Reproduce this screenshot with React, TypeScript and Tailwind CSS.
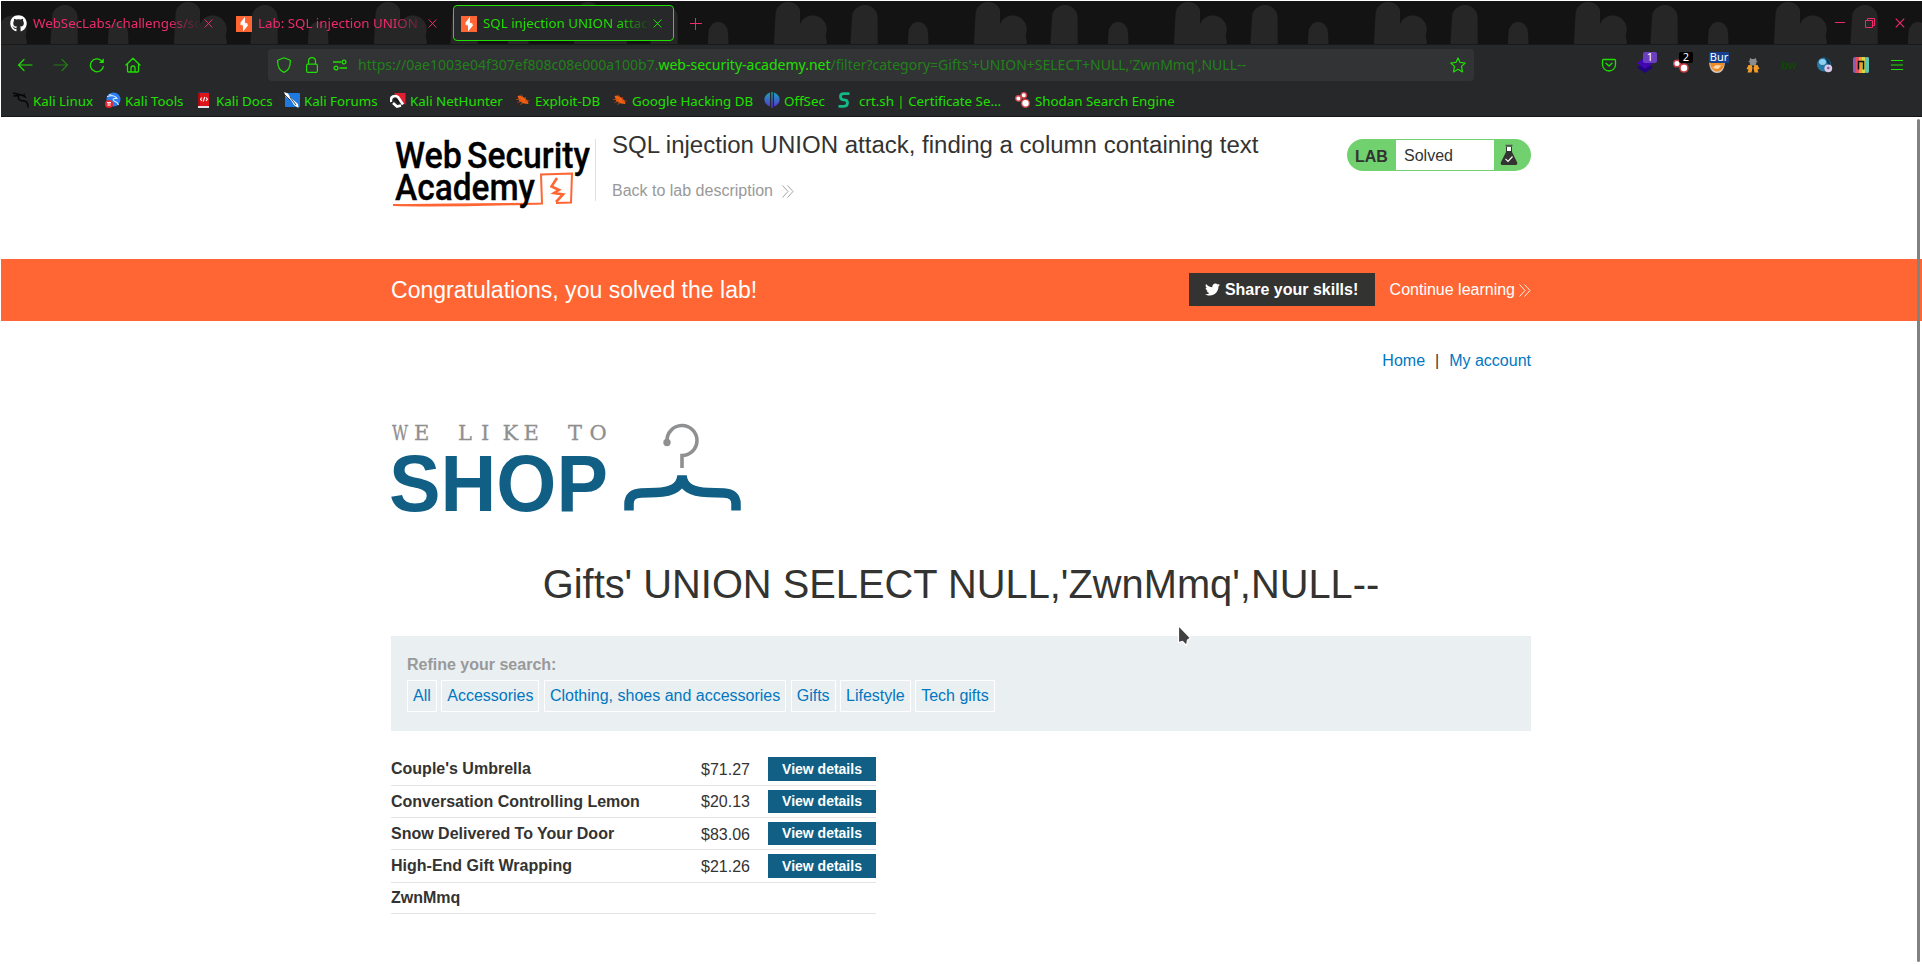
import React from 'react';
import { FaGithub, FaTwitter } from 'react-icons/fa';

const BurpIcon = () => (
  <svg width="16" height="16" viewBox="0 0 16 16" className="shrink-0">
    <rect width="16" height="16" fill="#ff6633" />
    <path d="M9 0.800 L4 7.200 L7 9 V15.400 L12.300 9 L8.900 7.200 Z" fill="#fff" />
    <path d="M7 9 L4.500 8.500 M8.900 7.200 L11.500 8" stroke="#fff" strokeWidth="1" />
  </svg>
);

const Fingers = () => (
  <svg className="absolute inset-0" width="1921" height="43">
    <defs>
      <pattern id="fingers" width="200" height="43" patternUnits="userSpaceOnUse" x="-1" y="0">
        <g fill="#262626">
          <path d="M0 23 A12.500 12.500 0 0 1 25.500 34 L27 43 H0 Z" />
          <path d="M174 43 L175.500 14 A12.700 13 0 0 1 201 14 V43 Z" />
          <path d="M50.500 43 L52 17 A12.800 13 0 0 1 77.600 17 V43 Z" />
          <path d="M108 43 L108.500 32 A9.700 11 0 0 1 128 32 L128.500 43 Z" />
        </g>
      </pattern>
    </defs>
    <rect width="1921" height="43" fill="url(#fingers)" />
  </svg>
);

const Cross = ({ size = 9 }: { size?: number }) => (
  <svg width={size} height={size} viewBox="0 0 9 9" fill="none" stroke="currentColor" strokeWidth="1">
    <path d="M0.700 0.500 L8.300 8.500 M8.300 0.500 L0.700 8.500" />
  </svg>
);

const BackIcon = () => (
  <svg width="16" height="16" viewBox="0 0 16 16" fill="none" stroke="currentColor" strokeWidth="1.200" strokeLinecap="round">
    <path d="M1.500 8 H15 M7 2.500 L1.500 8 L7 13.500" />
  </svg>
);

const ReloadIcon = () => (
  <svg width="16" height="16" viewBox="0 0 16 16" fill="none" stroke="currentColor" strokeWidth="1.300">
    <path d="M14.400 9 A6.500 6.500 0 1 1 12.500 3.700" />
    <path d="M14.800 1.200 V6 H10 Z" fill="currentColor" stroke="none" />
  </svg>
);

const HomeIcon = () => (
  <svg width="16" height="16" viewBox="0 0 16 16" fill="none" stroke="currentColor" strokeWidth="1.300" strokeLinejoin="round" strokeLinecap="round">
    <path d="M1 8 L8 1.300 L15 8 M2.500 7 V14 Q2.500 15 3.500 15 H12.500 Q13.500 15 13.500 14 V7 M6 15 V10.500 Q6 9 8 9 Q10 9 10 10.500 V15" />
  </svg>
);

const ShieldIcon = () => (
  <svg width="16" height="16" viewBox="0 0 16 16" fill="none" stroke="currentColor" strokeWidth="1.200" strokeLinejoin="round">
    <path d="M8 0.800 L14.300 3.200 C14.600 9 12.500 13.500 8 15.400 C3.500 13.500 1.400 9 1.700 3.200 Z" />
  </svg>
);

const LockIcon = () => (
  <svg width="16" height="16" viewBox="0 0 16 16" fill="none" stroke="currentColor" strokeWidth="1.200">
    <rect x="2.600" y="7.200" width="10.800" height="8.200" rx="1.500" />
    <path d="M4.500 7 V4.200 A3.500 3.500 0 0 1 11.500 4.200 V7" />
  </svg>
);

const PermIcon = () => (
  <svg width="16" height="16" viewBox="0 0 16 16" fill="none" stroke="currentColor" strokeWidth="1.300">
    <path d="M1 5 H9 M7.500 11 H15" />
    <circle cx="12" cy="5" r="1.900" />
    <circle cx="4" cy="11" r="1.900" />
  </svg>
);

const StarIcon = () => (
  <svg width="16" height="16" viewBox="0 0 16 16" fill="none" stroke="currentColor" strokeWidth="1.200" strokeLinejoin="round">
    <path d="M8 0.900 L10.100 5.400 L15.200 6 L11.500 9.400 L12.500 14.900 L8 12.300 L3.500 14.900 L4.500 9.400 L0.800 6 L5.900 5.400 Z" />
  </svg>
);

const Spider = () => (
  <svg width="16" height="16" viewBox="0 0 16 16">
    <path d="M2.500 4 L5 3.500 L9 5.500 L12.500 8.500 L13.500 12 L9 11.500 L4.500 9.500 Z" fill="#f06014" />
    <path d="M1 7.500 H6 M2.500 10.500 L7 9 M5 12.500 L8 11 M6 2.500 L8.500 6 M10.500 5 L10.500 8 M14.500 9 L10 9" stroke="#c4480e" strokeWidth="0.800" fill="none" />
  </svg>
);

const bookmarks: { label: string; slot: string; icon: React.ReactNode }[] = [
  {
    label: 'Kali Linux',
    slot: 'w-[92px]',
    icon: (
      <svg width="16" height="16" viewBox="0 0 16 16" fill="none" stroke="#050505" strokeWidth="1.400">
        <path d="M0 1 L6 2.500 L10 3.500 L13 5.500 M0.500 4 L6 3.500 M6 3 C4 7 7 9 11 9 C14 9 15 12 15 15.500 M9 4 L12 2.500" />
      </svg>
    ),
  },
  {
    label: 'Kali Tools',
    slot: 'w-[91px]',
    icon: (
      <svg width="16" height="16" viewBox="0 0 16 16">
        <circle cx="8.500" cy="7.500" r="7" fill="#2c7df0" />
        <path d="M2 4.500 C7 3 11 4 12 6.500 C9 6 7 7 9 9 C12 10 13 11 13.500 13 M4 2.500 L10 4.500" stroke="#cfe4ff" strokeWidth="1.100" fill="none" />
        <circle cx="4" cy="12" r="4" fill="#e8262b" />
        <path d="M2 10.500 H6 M3.200 10.500 V14 M4.900 10.500 V14" stroke="#fff" strokeWidth="0.900" />
      </svg>
    ),
  },
  {
    label: 'Kali Docs',
    slot: 'w-[88px]',
    icon: (
      <svg width="16" height="16" viewBox="0 0 16 16">
        <rect x="2" y="0" width="11" height="2" fill="#233a6b" />
        <rect x="2" y="1" width="11" height="13" fill="#dd1519" />
        <rect x="2" y="1" width="2" height="13" fill="#a50d10" />
        <rect x="2" y="14" width="11" height="2" fill="#dfe3e8" />
        <path d="M5.800 5.500 L4.500 7.200 L5.800 9 M10 5.500 L11.500 7.200 L10 9 M8.700 5 L7.200 9.500" stroke="#fff" strokeWidth="1.100" fill="none" />
      </svg>
    ),
  },
  {
    label: 'Kali Forums',
    slot: 'w-[106px]',
    icon: (
      <svg width="16" height="16" viewBox="0 0 16 16">
        <rect x="1" y="1" width="15" height="14" rx="1" fill="#1f7ae0" />
        <path d="M0 0 L4 1.500 L6 5 L14 12 L14.500 16 L10 13 L7 8 L2 5 Z" fill="#fff" />
        <path d="M1 3 L6 8 M6 5 L12 13" stroke="#1b1b1b" strokeWidth="0.800" />
      </svg>
    ),
  },
  {
    label: 'Kali NetHunter',
    slot: 'w-[125px]',
    icon: (
      <svg width="16" height="16" viewBox="0 0 16 16">
        <path d="M4 1 H15.500 V13 Z" fill="#e02030" />
        <path d="M1 10 C0 4 5 3 8 5 L13 12.500 M3 11 L7 14.500 L11 13.500" stroke="#fff" strokeWidth="2.600" fill="none" />
        <path d="M4 8 C6 6.500 8 8 8.500 11" stroke="#111" strokeWidth="1.400" fill="none" />
      </svg>
    ),
  },
  { label: 'Exploit-DB', slot: 'w-[97px]', icon: <Spider /> },
  { label: 'Google Hacking DB', slot: 'w-[152px]', icon: <Spider /> },
  {
    label: 'OffSec',
    slot: 'w-[74px]',
    icon: (
      <svg width="16" height="16" viewBox="0 0 16 16">
        <defs>
          <linearGradient id="off" x1="0" y1="0" x2="0" y2="1">
            <stop offset="0" stopColor="#16a5b8" />
            <stop offset="1" stopColor="#5b2fd6" />
          </linearGradient>
        </defs>
        <path d="M6 0.500 V14.500 C-1.500 12 -1.500 3 6 0.500 Z M7.300 0 H8.700 V16 H7.300 Z M10 0.500 C17.500 3 17.500 12 10 14.500 Z" fill="url(#off)" />
      </svg>
    ),
  },
  {
    label: 'crt.sh | Certificate Se...',
    slot: 'w-[177px]',
    icon: (
      <svg width="17" height="16" viewBox="0 0 17 16" fill="none" stroke="#12b886" strokeWidth="2.800">
        <path d="M11.500 1.600 H5.500 Q2.500 1.600 2.500 4.500 Q2.500 7.800 6 7.800 Q9.500 7.800 9.500 10.800 Q9.500 14.300 6 14.300 H0.500" />
      </svg>
    ),
  },
  {
    label: 'Shodan Search Engine',
    slot: 'w-[170px]',
    icon: (
      <svg width="16" height="16" viewBox="0 0 16 16" fill="#fff" stroke="#d0454c" strokeWidth="1.400">
        <circle cx="3.400" cy="6.400" r="2.700" />
        <circle cx="8.800" cy="3.300" r="2.700" />
        <circle cx="10.500" cy="11.300" r="3.900" />
      </svg>
    ),
  },
];

const extensions: React.ReactNode[] = [
  <svg width="16" height="16" viewBox="0 0 16 16" fill="none" stroke="#20e000" strokeWidth="1.300" strokeLinejoin="round" strokeLinecap="round">
    <path d="M2.500 2.500 H13.500 Q14.500 2.500 14.500 3.500 V7.500 A6.500 6.500 0 0 1 1.500 7.500 V3.500 Q1.500 2.500 2.500 2.500 Z M5 6.200 L8 9 L11 6.200" />
  </svg>,
  <svg width="16" height="16" viewBox="0 0 16 16">
    <path d="M8 5 L16 10.500 L8 16 L0 10.500 Z" fill="#22057e" />
    <path d="M8 0 L16 6 L8 12 L0 6 Z" fill="#4207b0" />
  </svg>,
  <svg width="16" height="16" viewBox="0 0 16 16" fill="#fff" stroke="#c94048" strokeWidth="1.600">
    <circle cx="4" cy="6.500" r="3.300" />
    <circle cx="11" cy="11" r="4" />
  </svg>,
  <svg width="16" height="16" viewBox="0 0 16 16">
    <path d="M0 3 H16 C16 10 14 16 8 16 C2 16 0 10 0 3 Z" fill="#cfc6be" />
    <path d="M1 5 H15 C15 10 13 14 8 14.500 C4 14 1 10 1 5 Z" fill="#f08a24" />
    <path d="M3.500 11 L7 8 L12.500 8.500 L9 12 Z" fill="#fbd9ae" />
  </svg>,
  <svg width="16" height="16" viewBox="0 0 16 16">
    <path d="M4.500 4 L5 1 L7 2 H9 L11 1 L11.500 4 L13 5 H11.500 L11 7.500 L9.500 8.500 H6.500 L5 7.500 L4.500 5 H3 Z" fill="#8d8d8d" />
    <path d="M3.500 8 H6.500 L7.500 11 L6.500 15.500 H2.500 L3.500 12.500 L1.500 12 Z M12.500 8 H9.500 L8.500 11 L9.500 15.500 H13.500 L12.500 12.500 L14.500 12 Z" fill="#f39a27" />
  </svg>,
  <span className="font-['Liberation_Sans'] text-[11px] leading-4 font-black text-[#0b4a08]">bw</span>,
  <svg width="16" height="16" viewBox="0 0 16 16">
    <circle cx="7" cy="7.500" r="7" fill="#2878a4" />
    <ellipse cx="5.500" cy="5" rx="3.500" ry="3" fill="#8fd0ee" />
    <path d="M7 0.500 A7 7 0 0 1 9 14 C12 9 11 4 7 0.500" fill="#0f3550" />
    <circle cx="11.300" cy="11.300" r="3.900" fill="#d9c9e4" />
    <circle cx="11.300" cy="11" r="1.300" fill="#8756a8" />
  </svg>,
  <svg width="16" height="16" viewBox="0 0 16 16">
    <rect width="16" height="16" rx="2" fill="#8b5bb5" />
    <rect x="3" width="3" height="16" fill="#e8505b" />
    <rect x="6" width="3" height="16" fill="#f59b3a" />
    <rect x="9" width="3" height="16" fill="#d8d845" />
    <rect x="12" width="4" height="16" rx="2" fill="#5cc6b0" />
    <path d="M5.500 12.500 V4.500 H10.500 V12.500" fill="none" stroke="#111" strokeWidth="1.600" />
  </svg>,
  <svg width="16" height="16" viewBox="0 0 16 16" stroke="#20e000" strokeWidth="1.200">
    <path d="M2 3.500 H14 M2 8 H14 M2 12.500 H14" />
  </svg>,
];

const badges: (React.ReactNode | null)[] = [
  null,
  <span className="absolute -top-[5px] left-[6px] flex h-[11px] w-[14px] items-center justify-center rounded-[2px] bg-[#6c3fc0] text-[11px] text-white">1</span>,
  <span className="absolute -top-[5px] left-[6px] flex h-[11px] w-[14px] items-center justify-center rounded-[2px] bg-black text-[11px] text-white">2</span>,
  <span className="absolute -top-[5px] left-0 flex h-[11px] w-[20px] items-center justify-center rounded-[1px] bg-[#173f8f] text-[11px] text-white">Bur</span>,
];

const DoubleChevron = () => (
  <svg width="12" height="13" viewBox="0 0 12 13" fill="none" stroke="currentColor" strokeWidth="0.900">
    <path d="M0.500 0.500 L6 6.500 L0.500 12.500 M5.500 0.500 L11 6.500 L5.500 12.500" />
  </svg>
);

const filters = ['All', 'Accessories', 'Clothing, shoes and accessories', 'Gifts', 'Lifestyle', 'Tech gifts'];

const products = [
  { name: "Couple's Umbrella", price: '$71.27', row: 'h-[33px]', pad: 'pt-[2px]', button: 'h-6' },
  { name: 'Conversation Controlling Lemon', price: '$20.13', row: 'h-[32px]', pad: '', button: 'h-[23px]' },
  { name: 'Snow Delivered To Your Door', price: '$83.06', row: 'h-[32px]', pad: 'pt-[2px]', button: 'h-[23px]' },
  { name: 'High-End Gift Wrapping', price: '$21.26', row: 'h-[33px]', pad: 'pt-px', button: 'h-6' },
  { name: 'ZwnMmq', price: '', row: 'h-[31px]', pad: '', button: '' },
];

const tabLabel = 'ml-[6px] w-[168px] overflow-hidden whitespace-nowrap pt-px [mask-image:linear-gradient(to_right,black_80%,transparent)]';

function TabStrip() {
  return (
    <div className="relative h-[44px] border-b border-[#191919] bg-[#131313] text-[13.333px] text-[#ee2b6a]">
      <Fingers />
      <div className="relative flex h-[43px] pt-1">
        <div className="flex h-9 w-[215px] items-center pt-px pl-[9px]">
          <FaGithub size={17} color="#fff" className="shrink-0" />
          <span className={tabLabel}>WebSecLabs/challenges/sql</span>
          <span className="ml-[3px]"><Cross /></span>
        </div>
        <div className="flex h-9 w-[237px] items-center pt-px pl-[20px]">
          <BurpIcon />
          <span className={tabLabel}>Lab: SQL injection UNION attack</span>
          <span className="ml-[2px]"><Cross /></span>
        </div>
        <div className="flex h-9 w-[221px] items-center rounded-[4px] border border-[#20e000] bg-[#262829] pt-px pl-[7px] text-[#20e000]">
          <BurpIcon />
          <span className={tabLabel}>SQL injection UNION attack, finding</span>
          <span className="ml-[2px]"><Cross /></span>
        </div>
        <svg width="12" height="12" viewBox="0 0 12 12" className="mt-[13px] ml-[16px]" stroke="currentColor" strokeWidth="1">
          <path d="M0 5.500 H12 M5.500 0 V12" />
        </svg>
        <div className="ml-auto flex h-9 items-center gap-[20px] pr-[17px]">
          <svg width="10" height="10" viewBox="0 0 10 10" stroke="currentColor"><path d="M0 4.500 H10" /></svg>
          <svg width="10" height="10" viewBox="0 0 10 10" fill="none" stroke="currentColor"><path d="M0.500 2.500 H7.500 V9.500 H0.500 Z M2.500 2.500 V0.500 H9.500 V7.500 H7.500" /></svg>
          <Cross size={10} />
        </div>
      </div>
    </div>
  );
}

function NavBar() {
  return (
    <div className="flex h-[40px] items-center text-[#20e000]">
      <div className="flex w-[267px] items-center gap-5 pl-4">
        <BackIcon />
        <span className="rotate-180 opacity-45"><BackIcon /></span>
        <ReloadIcon />
        <HomeIcon />
      </div>
      <div className="flex h-8 w-[1206px] items-center rounded-[4px] bg-[#323335] pr-2 pl-2">
        <div className="flex w-[82px] shrink-0 gap-3">
          <ShieldIcon />
          <LockIcon />
          <PermIcon />
        </div>
        <span className="pb-px text-[14px] whitespace-pre text-[#22801a]">
          https://0ae1003e04f307ef808c08e000a100b7.<span className="text-[#20e000]">web-security-academy.net</span>/filter?category=Gifts'+UNION+SELECT+NULL,'ZwnMmq',NULL--
        </span>
        <span className="ml-auto"><StarIcon /></span>
      </div>
      <div className="ml-auto flex gap-5 pr-[17px]">
        {extensions.map((icon, i) => (
          <span key={i} className="relative flex h-4 w-4 items-center justify-center">
            {icon}
            {badges[i]}
          </span>
        ))}
      </div>
    </div>
  );
}

function Browser() {
  return (
    <header className="ml-px h-[116px] border-b border-[#161616] bg-[#262829] font-['Noto_Sans',sans-serif]">
      <TabStrip />
      <NavBar />
      <nav className="flex h-[31px] items-center pl-3 text-[13.333px] text-[#20e000]">
        {bookmarks.map((b) => (
          <div key={b.label} className={'flex shrink-0 items-center gap-1 whitespace-nowrap ' + b.slot}>
            <span className="shrink-0">{b.icon}</span>
            <span className="pt-[2px]">{b.label}</span>
          </div>
        ))}
      </nav>
    </header>
  );
}

const AcademyLogo = () => (
  <svg width="200" height="76" viewBox="0 0 200 76" className="-ml-px shrink-0">
    <g fill="none" stroke="#ff6633">
      <path d="M3 66 C50 67.500 90 66 152 64.500 L151 35.500 L182 34.500 L181 63.500 L166 64" strokeWidth="2" />
      <path d="M3 66 L60 65.300 L140 64.500" strokeWidth="1.500" />
      <path d="M167 39 L161.500 47.500 L169 51 L164 54 L173 55.500 L166 63" strokeWidth="2.600" />
    </g>
    <g fill="#000" stroke="#000" strokeWidth="0.300" fontFamily="Roboto" fontWeight="500" fontSize="37.500">
      <text x="5" y="28.500" textLength="67" lengthAdjust="spacingAndGlyphs">Web</text>
      <text x="77" y="28.500" textLength="123" lengthAdjust="spacingAndGlyphs">Security</text>
      <text x="5" y="61" textLength="140" lengthAdjust="spacingAndGlyphs">Academy</text>
    </g>
  </svg>
);

const ShopLogo = () => (
  <svg width="352" height="92" viewBox="0 0 352 92">
    <g fontFamily="DejaVu Serif" fontSize="21" fill="#8f8f8f" stroke="#8f8f8f" strokeWidth="0.300">
      <text x="1" y="18" textLength="16" lengthAdjust="spacingAndGlyphs">W</text>
      <text y="18" x="23 67 90 111.500 132.500">ELIKE</text>
      <text y="18" x="177 198.500">TO</text>
    </g>
    <text x="-2" y="89" fontFamily="Liberation Sans" fontWeight="700" fontSize="80" fill="#115f84" textLength="219" lengthAdjust="spacingAndGlyphs">SHOP</text>
    <path d="M276 19 A15 15 0 1 1 291 33.500 V46" fill="none" stroke="#8f9092" strokeWidth="3.600" />
    <circle cx="276" cy="20.500" r="3.700" fill="#8f9092" />
    <path d="M238 88.500 V82 Q238 71.500 250 71 L265 70.500 Q290 70 291 53.500 Q292 70 317 70.500 L333 71 Q345 71.500 345 82 V88.500" fill="none" stroke="#115f84" strokeWidth="9.500" />
  </svg>
);

function LabHeader() {
  return (
    <section className="mx-auto flex h-[142px] w-[1140px]">
      <div className="mt-[22px] flex h-[62px] w-[205px] border-r border-[#e0e0e0]">
        <AcademyLogo />
      </div>
      <div className="pt-[14px] pl-[16px]">
        <h2 className="text-[24.03px] leading-7">SQL injection UNION attack, finding a column containing text</h2>
        <a className="mt-[22px] flex items-center gap-[9px] text-[16px] leading-5 text-[#999]">
          Back to lab description <DoubleChevron />
        </a>
      </div>
      <div className="mt-[22px] ml-auto flex h-8 w-[184px] items-center rounded-full bg-[#71d16e]">
        <span className="w-[49px] pt-[3px] pl-[8px] text-[16px] leading-6 font-bold">LAB</span>
        <span className="flex h-[30px] w-[98px] items-center bg-white pt-[2px] pl-2 text-[16px]">Solved</span>
        <svg width="18" height="22" viewBox="0 0 18 22" className="ml-[6px]">
          <path d="M6 2.500 H12 V8 L17 18 Q18 21 15.500 21 H2.500 Q0 21 1 18 L6 8 Z" fill="#333332" />
          <rect x="7" y="3" width="4" height="4" fill="#fff" />
          <path d="M5.500 1.500 H12.500" stroke="#555" strokeWidth="1.500" />
          <path d="M5.500 14.800 L8 17.300 L12.500 12.500" fill="none" stroke="#fff" strokeWidth="1.200" />
        </svg>
      </div>
    </section>
  );
}

export default function App() {
  return (
    <div className="relative h-[965px] w-[1922px] overflow-hidden bg-white pt-px font-['Liberation_Sans',Arial,sans-serif] text-[#333332]">
      <Browser />
      <LabHeader />
      <section className="ml-px h-[62px] bg-[#ff6633] text-white">
        <div className="ml-[390px] flex h-full w-[1140px] items-center">
          <p className="text-[23.04px]">Congratulations, you solved the lab!</p>
          <div className="mb-px ml-auto flex h-[33px] w-[186px] items-center justify-center gap-[5px] bg-[#333332] text-[16px] font-bold">
            <FaTwitter size={15} />
            Share your skills!
          </div>
          <a className="ml-[15px] flex items-center gap-[4px] text-[16px]">
            Continue learning <DoubleChevron />
          </a>
        </div>
      </section>
      <main className="mx-auto w-[1140px]">
        <div className="flex h-[80px] items-center justify-end gap-[10px] text-[16px] text-[#0077c0]">
          <a>Home</a>
          <span className="text-[#333332]">|</span>
          <a>My account</a>
        </div>
        <div className="h-[140px] pt-[21px]">
          <ShopLogo />
        </div>
        <h1 className="flex h-[95px] items-center justify-center pb-[7px] text-[39.84px]">Gifts' UNION SELECT NULL,'ZwnMmq',NULL--</h1>
        <div className="h-[95px] bg-[#eaeff2] px-4 pt-[18px]">
          <p className="text-[16px] leading-[22px] font-bold text-[#999]">Refine your search:</p>
          <div className="mt-1 flex gap-[4.440px] text-[16px] text-[#0077c0]">
            {filters.map((f) => (
              <a key={f} className="flex h-8 items-center border border-white px-[5px]">{f}</a>
            ))}
          </div>
        </div>
        <div className="mt-[22px] w-[485px]">
          {products.map((p) => (
            <div key={p.name} className={'flex items-center border-b border-[#e4e4e4] ' + p.row}>
              <span className="w-[310px] text-[16px] leading-5 font-bold">{p.name}</span>
              <span className={'w-[67px] text-[16px] leading-5 ' + p.pad}>{p.price}</span>
              {p.price && (
                <span className={'flex w-[108px] items-center justify-center bg-[#115f84] text-[14px] font-bold text-white ' + p.button}>View details</span>
              )}
            </div>
          ))}
        </div>
      </main>
      <div className="absolute top-[119px] left-[1917px] h-[843px] w-[3px] rounded-full bg-[#7f8482]" />
      <svg className="absolute top-[624px] left-[1177px]" width="16" height="24" viewBox="0 0 16 24">
        <path d="M1.500 1.500 V18.500 L5.500 17.500 L9.500 21.500 L10.500 16 L13.500 14 Z" fill="#404040" stroke="#fff" strokeWidth="1.200" />
      </svg>
    </div>
  );
}
